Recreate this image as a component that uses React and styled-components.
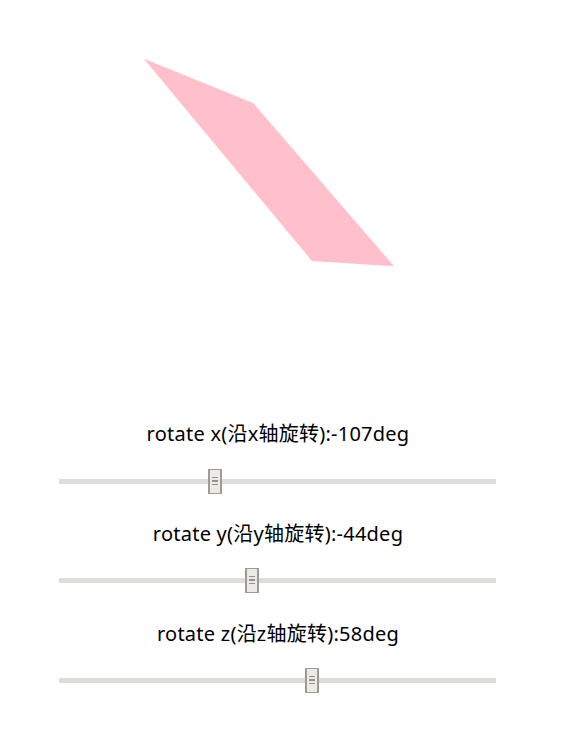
import React from "react";
import styled, { createGlobalStyle } from "styled-components";

const Global = createGlobalStyle`
  html, body { margin: 0; padding: 0; background: #fff; }
  body { font-family: "Noto Sans", "Noto Sans CJK SC", sans-serif; color: #000; }
`;
const Page = styled.main`
  width: 555px;
  height: 736px;
  overflow: hidden;
  display: flex;
  flex-direction: column;
  align-items: center;
`;
const Stage = styled.svg`
  display: block;
  width: 555px;
  height: 420.3px;
  flex: none;
`;
const Controls = styled.div`
  display: flex;
  flex-direction: column;
  gap: 26.35px;
  width: 437px;
`;
const Control = styled.div`
  display: flex;
  flex-direction: column;
  align-items: center;
`;
const Label = styled.label`
  font-size: 20px;
  letter-spacing: 0.24px;
  line-height: 28px;
  height: 28px;
  padding-left: 1px;
  white-space: nowrap;
`;
const Range = styled.input`
  -webkit-appearance: none;
  appearance: none;
  display: block;
  width: 437px;
  height: 25px;
  margin: 20.4px 0 0;
  padding: 0;
  background: transparent;
  &::-webkit-slider-runnable-track {
    height: 5px;
    background: #e0ddd8;
  }
  &::-webkit-slider-thumb {
    -webkit-appearance: none;
    box-sizing: border-box;
    width: 14px;
    height: 25px;
    margin-top: -10px;
    border: 1px solid #a09b92;
    border-left-width: 2px;
    border-right-width: 2px;
    background:
      linear-gradient(#94908a, #94908a) center 7px / 6px 1px no-repeat,
      linear-gradient(#94908a, #94908a) center 10px / 6px 2px no-repeat,
      linear-gradient(#94908a, #94908a) center 14px / 6px 1px no-repeat,
      #ece9e6;
  }
`;
const axes = [
  { axis: "x", cn: "沿x轴旋转", value: -107 },
  { axis: "y", cn: "沿y轴旋转", value: -44 },
  { axis: "z", cn: "沿z轴旋转", value: 58 },
];
export default function App() {
  return (
    <Page>
      <Global />
      <Stage viewBox="0 0 555 420.3" aria-hidden="true">
        <polygon points="143.8,58.8 253.2,103 394,266.2 312,261" fill="#ffc0cb" />
      </Stage>
      <Controls>
        {axes.map((a) => (
          <Control key={a.axis}>
            <Label>{`rotate ${a.axis}(${a.cn}):${a.value}deg`}</Label>
            <Range type="range" min={-360} max={360} defaultValue={a.value} />
          </Control>
        ))}
      </Controls>
    </Page>
  );
}
